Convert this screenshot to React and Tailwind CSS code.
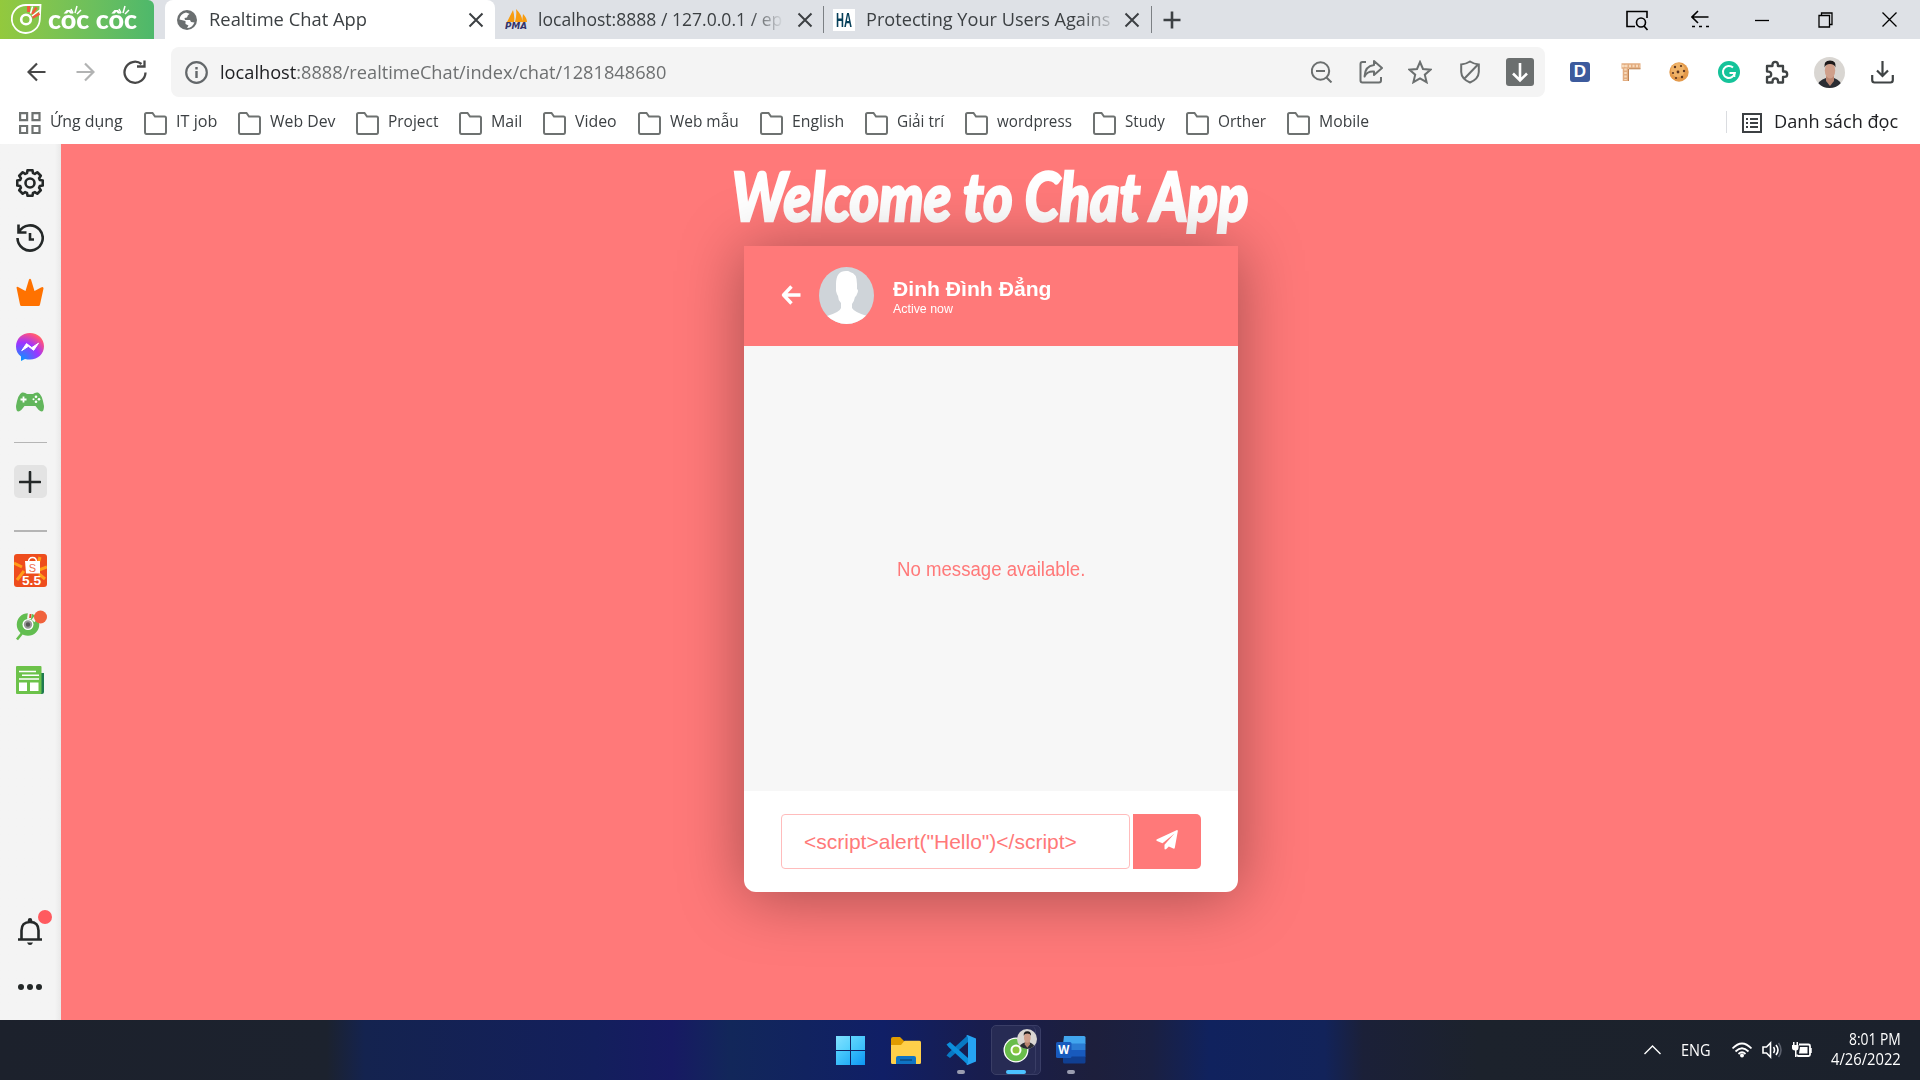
import { useLayoutEffect, useRef, useState } from "react";

const UI = "font-['Open_Sans','Noto_Sans',sans-serif]";

/* Single line of text condensed or stretched to an exact width. */
function Fit({ w, className = "", children }) {
  const ref = useRef(null);
  const [scale, setScale] = useState(1);
  useLayoutEffect(() => {
    setScale(w / ref.current.offsetWidth);
  }, [w]);
  return (
    <span className={"block shrink-0 " + className} style={{ width: w }}>
      <span ref={ref} className="inline-block origin-left whitespace-nowrap" style={{ transform: `scaleX(${scale})` }}>
        {children}
      </span>
    </span>
  );
}

function Icon({ s = 24, w = s, h = s, box, sw = 2, className = "", children }) {
  return (
    <svg width={w} height={h} viewBox={box || `0 0 ${w} ${h}`} fill="none" stroke="currentColor" strokeWidth={sw} className={"block shrink-0 " + className}>
      {children}
    </svg>
  );
}

const Close = ({ className }) => (
  <Icon s={16} className={"text-[#3c4043] " + className}>
    <path d="M1.5 1.5l13 13M14.5 1.5l-13 13" />
  </Icon>
);

const Folder = () => (
  <Icon w={23} h={23} sw={2} className="text-[#6e7271]">
    <path d="M1 4V2.5Q1 1 2.5 1H8.500l2.500 3.500H20.500Q22 4.500 22 6V20Q22 22 20.500 22H2.500Q1 22 1 20Z" />
  </Icon>
);

const bookmarks = [
  ["IT job", 41], ["Web Dev", 65], ["Project", 50], ["Mail", 31], ["Video", 42], ["Web mẫu", 69],
  ["English", 52], ["Giải trí", 47], ["wordpress", 75], ["Study", 40], ["Orther", 48], ["Mobile", 50],
];

function TabStrip() {
  return (
    <div className="flex h-[39px] items-center bg-[#dee1e6]">
      <div className="flex h-[39px] w-[154px] items-center rounded-tr-[6px] bg-linear-to-r from-[#93c93d] to-[#4db86b] pl-[11px]">
        <Icon w={31} h={32} sw={1.8} className="text-white">
          <path d="M15 1H29.500L28.800 15.500A14 14 0 1 1 15 1" />
          <circle cx="15" cy="15.500" r="4.800" strokeWidth="2.600" />
          <path d="M17.500 2v6" stroke="#f15a3c" strokeWidth="3" />
          <path d="M25.500 3.500l-4.500 6.500M28.500 9.500l-7 4" stroke="#f15a3c" strokeWidth="2.600" />
          <path d="M21.500 2.500l-2 7M29 6l-8 6" strokeWidth="1.500" />
        </Icon>
        <div className="relative ml-[6px] h-[39px] w-[90px]">
          <Fit w={89} className="pt-[3px] font-['Lato',sans-serif] text-[26px] leading-[32px] font-black text-white">côc côc</Fit>
          <svg width="90" height="14" className="absolute top-[4px] left-0" fill="none" stroke="white" strokeWidth="1.500">
            <path d="M25 9l-2-4M27 9l2-7M29 10l4-4M73 9l-2-4M75 9l2-7M77 10l4-4" />
          </svg>
        </div>
      </div>
      <div className="ml-[11px] flex h-[39px] w-[330px] items-center rounded-t-[8px] bg-white pl-[12px]">
        <Icon s={20}>
          <circle cx="10" cy="10" r="10" fill="#6b6f70" stroke="none" />
          <path d="M9 2.500Q3 4 2.500 9.500l6 1.500v3l3 1.500L10 18Q15 18 17.500 12.500L14 12l-1-2H8L7.500 8 10 7.500 11 5l2-1z" fill="#fff" stroke="none" />
          <path d="M12 3.500l1 3.500 4 2.500-1-4z" fill="#6b6f70" stroke="none" />
        </Icon>
        <Fit w={158} className="ml-[12px] pb-px text-[18px] text-[#3c4043]">Realtime Chat App</Fit>
        <Close className="ml-[101px]" />
      </div>
      <div className="flex h-[39px] w-[330px] items-center pl-[10px]">
        <Icon w={23} h={23}>
          <path d="M2 14L8 2Q10 9 9 14ZM10 14Q12 7 11 1Q18 8 17 14ZM17 14l1-8q4 4 4 8z" fill="#f89c0e" stroke="none" />
          <text x="0" y="21" fontSize="9" textLength="22" lengthAdjust="spacingAndGlyphs" fill="#34346a" stroke="none" className="font-['DejaVu_Sans'] font-bold italic">PMA</text>
        </Icon>
        <div className="ml-[10px] w-[246px] mask-[linear-gradient(to_right,black_212px,transparent_246px)] pb-px">
          <Fit w={244} className="text-[18px] text-[#3c4043]">localhost:8888 / 127.0.0.1 / ep</Fit>
        </div>
        <Close className="ml-[13px]" />
      </div>
      <div className="-ml-[2px] h-[27px] w-px bg-[#7c8084]" />
      <div className="flex h-[39px] w-[328px] items-center pl-[9px]">
        <div className="flex h-[22px] w-[22px] items-center bg-white pl-[3px] font-['Liberation_Sans'] text-[20px] font-bold text-[#07405a]">
          <Fit w={16}>HA</Fit>
        </div>
        <div className="ml-[11px] w-[246px] mask-[linear-gradient(to_right,black_212px,transparent_252px)] pb-px">
          <Fit w={244} className="text-[18px] text-[#3c4043]">Protecting Your Users Agains</Fit>
        </div>
        <Close className="ml-[12px]" />
      </div>
      <div className="-ml-px h-[27px] w-px bg-[#7c8084]" />
      <Icon s={18} sw={2.6} className="ml-[11px] text-[#3c4043]"><path d="M9 0.500v17M0.500 9h17" /></Icon>
      <div className="ml-auto flex items-center pr-[23px] text-black">
        <Icon w={23} h={22} sw={1.6}>
          <path d="M9 17.500H1V2.500H21V9" />
          <circle cx="15" cy="13.500" r="4.500" />
          <path d="M18 17l3.500 4" />
        </Icon>
        <Icon w={18} h={20} sw={1.6} className="ml-[42px]">
          <path d="M17.500 7H1.500M7 1L1 7l6 6" />
          <path d="M1 16.500h17" strokeDasharray="3 4" />
        </Icon>
        <Icon w={14} h={20} sw={1.3} className="ml-[46px]"><path d="M0 10.500h14" /></Icon>
        <Icon w={15} h={16} sw={1.3} className="ml-[49px]"><path d="M1 3.500h10.500V15H1zM3.500 3.500V1H14v11.500h-2.500" /></Icon>
        <Icon s={15} sw={1.3} className="ml-[49px]"><path d="M0.500 0.500l14 14M14.500 0.500l-14 14" /></Icon>
      </div>
    </div>
  );
}

function Portrait({ size, className = "" }) {
  return (
    <svg width={size} height={size} viewBox="0 0 31 31" className={"block shrink-0 rounded-full " + className}>
      <rect width="31" height="31" fill="#d9d6d2" />
      <path d="M3 31Q4 23 12 21h8q7 2 8 10z" fill="#2b2d33" />
      <path d="M12 19h8v5l-4 5-4-5z" fill="#b98570" />
      <ellipse cx="16" cy="13.500" rx="5.200" ry="8" fill="#cf9f8a" />
      <path d="M10.500 10.500Q9.500 3.500 16 3.500t5.500 7Q20.500 7 16 7t-5.500 3.500z" fill="#1d1a1a" />
    </svg>
  );
}

function Toolbar() {
  return (
    <div className="flex h-[66px] items-center bg-white">
      <Icon w={19} h={20} sw={2.2} className="ml-[27px] text-[#474747]"><path d="M18.500 10H1.500M10 1.500L1.500 10l8.500 8.500" /></Icon>
      <Icon w={19} h={20} sw={2.2} className="ml-[30px] text-[#b2b3b3]"><path d="M0.500 10H17.500M9 1.500L17.500 10 9 18.500" /></Icon>
      <Icon s={24} sw={2.3} className="ml-[28px] text-[#474747]"><path d="M22.500 12.500A10.500 10.500 0 1 1 18.500 4M14 6.500H21.500V0.500" /></Icon>
      <div className="ml-[24px] flex h-[50px] w-[1374px] items-center rounded-[8px] bg-[#f4f4f4] pl-[14px]">
        <Icon s={23} className="text-[#63676a]">
          <circle cx="11.500" cy="11.500" r="10.300" strokeWidth="2.200" />
          <path d="M11.500 10v7M11.500 6v2.500" strokeWidth="2.400" />
        </Icon>
        <Fit w={446} className="ml-[12px] text-[18px] text-[#6e7071]"><span className="text-[#202124]">localhost</span>:8888/realtimeChat/index/chat/1281848680</Fit>
        <div className="ml-auto flex items-center pr-[11px] text-[#6b6f6f]">
          <Icon s={22}><circle cx="9.500" cy="10" r="8.700" /><path d="M5 10h9M15.500 16.500l5 5" /></Icon>
          <Icon s={24} className="ml-[26px]">
            <path d="M7 2H3.500Q1.500 2 1.500 4V20.500Q1.500 22.500 3.500 22.500H20Q22 22.500 22 20.500V17" />
            <path d="M15 1l8 7-8 7V11.500Q8 11 5.500 16.500 6 6 15 5z" strokeLinejoin="round" />
          </Icon>
          <Icon s={24} className="ml-[25px]"><path d="M12 2l3 7 7.500.700-5.700 5 1.800 7.500L12 18.300 5.400 22.200l1.800-7.500-5.700-5L9 9z" /></Icon>
          <Icon w={20} h={24} className="ml-[28px]"><path d="M10 1.500Q14 4 18.800 4.500V12Q18.500 19 10 22.500 1.500 19 1.200 12V4.500Q6 4 10 1.500zM4 19L17.500 5" /></Icon>
          <Icon s={28} className="ml-[26px]">
            <rect width="28" height="28" rx="3" fill="#6b6f6f" stroke="none" />
            <path d="M14 5v17M7 15.500l7 7 7-7" stroke="#fff" strokeWidth="2.600" />
          </Icon>
        </div>
      </div>
      <div className="ml-[25px] flex h-5 w-5 items-center justify-center rounded-[3px] bg-[#3c5a9d] font-['Liberation_Sans'] text-[17px] font-bold text-white">D</div>
      <Icon w={20} h={20} className="ml-[31px]">
        <path d="M0.500 4h19M4.500 1.500v17.500" stroke="#e3ad80" strokeWidth="5.500" />
        <path d="M1 4h18M4.500 3v15" stroke="#f8dabb" strokeWidth="2.500" strokeDasharray="2 1.500" />
        <path d="M7.500 7v12M8 6.800h11.500" stroke="#bd8252" strokeWidth="1" />
      </Icon>
      <Icon s={20} className="ml-[28px]">
        <circle cx="10" cy="10" r="9.700" fill="#e49a4b" stroke="none" />
        <circle cx="9" cy="8" r="7" fill="#efb267" stroke="none" />
        <g fill="#5b3420" stroke="none"><circle cx="6" cy="5" r="1.200" /><circle cx="12" cy="4" r="1.100" /><circle cx="15" cy="9" r="1.200" /><circle cx="9" cy="10" r="1.400" /><circle cx="4" cy="11" r="1.100" /><circle cx="13" cy="15" r="1.200" /><circle cx="7" cy="16" r="1.100" /></g>
      </Icon>
      <Icon s={22} className="ml-[29px]">
        <circle cx="11" cy="11" r="11" fill="#15c39a" stroke="none" />
        <path d="M15 6.500A6 6 0 1 0 16.800 12H11.500" stroke="#fff" strokeWidth="2" /><path d="M16.500 11v5" stroke="#fff" strokeWidth="1.600" />
      </Icon>
      <Icon w={24} h={24} sw={2.3} className="ml-[25px] text-[#3f4344]">
        <path d="M2 6H7.500V4.500a2.700 2.700 0 0 1 5.400 0V6H18v5.500h1.500a2.700 2.700 0 0 1 0 5.400H18V22.500H13V21a2.700 2.700 0 0 0-5.400 0v1.500H2V17H3.500a2.700 2.700 0 0 0 0-5.400H2z" strokeLinejoin="round" />
      </Icon>
      <Portrait size={31} className="ml-[25px]" />
      <Icon w={23} h={23} sw={2.2} className="ml-[26px] text-[#3f4344]"><path d="M11.500 0v14.500M6 9.500l5.500 5.500L17 9.500M1.200 14v5Q1.200 21.500 3.500 21.500H19.500Q21.800 21.500 21.800 19V14" /></Icon>
    </div>
  );
}

function BookmarksBar() {
  return (
    <div className="flex h-[39px] items-center bg-white pb-[6px] pl-[19px] text-[#3c4043]">
      <Icon w={22} h={23} sw={2.2} className="mt-[3px] text-[#6e7271]">
        <path d="M1.100 1.100h7v7h-7zM13.500 1.100h7v7h-7zM1.100 14h7v7h-7zM13.500 14h7v7h-7z" />
      </Icon>
      <Fit w={73} className="ml-[9px] pb-px text-[17px]">Ứng dụng</Fit>
      <div className="ml-[21px] flex gap-[21px]">
        {bookmarks.map(([label, w]) => (
          <div key={label} className="flex items-center gap-[9px]">
            <div className="mt-[3px]"><Folder /></div>
            <Fit w={w} className="pb-px text-[17px]">{label}</Fit>
          </div>
        ))}
      </div>
      <div className="ml-auto flex items-center pr-[22px]">
        <div className="h-[22px] w-px bg-[#dadce0]" />
        <Icon w={20} h={20} sw={2} className="mt-[2px] ml-[15px] text-[#3c4043]">
          <path d="M1 1h18v18H1zM8 6h8M8 10h8M8 14h8" /><path d="M4 6h2M4 10h2M4 14h2" />
        </Icon>
        <Fit w={124} className="ml-[12px] text-[18px] text-[#202124]">Danh sách đọc</Fit>
      </div>
    </div>
  );
}

const gearPath = (() => {
  const pts = [];
  for (let i = 0; i < 8; i++) {
    [[-0.3, 10.3], [-0.19, 13], [0.19, 13], [0.3, 10.3]].forEach(([o, r]) => {
      const t = (i * Math.PI) / 4 + o;
      pts.push(`${(14 + r * Math.sin(t)).toFixed(2)} ${(14 - r * Math.cos(t)).toFixed(2)}`);
    });
  }
  return "M" + pts.join("L") + "Z";
})();

function Sidebar() {
  return (
    <aside className="flex w-[61px] shrink-0 flex-col items-center bg-linear-to-r from-[#f4f4f4] from-90% to-[#e9e9e9] pt-[25px] pr-px text-[#242828]">
      <Icon s={28} sw={2.6}><path d={gearPath} strokeLinejoin="round" /><circle cx="14" cy="14" r="4.500" /></Icon>
      <Icon s={28} sw={2.6} className="mt-[27px]"><path d="M3 8A12.600 12.600 0 1 1 1.500 14M2.500 0.500V8.500H10.500M14 9v6.500h4" /></Icon>
      <Icon s={28} className="mt-[26px]">
        <path d="M0.500 9.500Q1 8 3 9.500L9.500 13 13 1.500Q14 0 15 1.500L18.500 13 25 9.500Q27.500 8 27.500 10.500L24 26.500Q23.700 28 22.500 28H5.500Q4.300 28 4 26.500z" fill="#ff7200" stroke="none" />
      </Icon>
      <Icon s={28} className="mt-[27px]">
        <defs><radialGradient id="msg" cx=".19" cy=".99" r="1.090"><stop offset="0" stopColor="#0099ff" /><stop offset=".6" stopColor="#a033ff" /><stop offset=".93" stopColor="#ff5280" /><stop offset="1" stopColor="#ff7061" /></radialGradient></defs>
        <path d="M14 0C6 0 0 5.800 0 13.600c0 4.100 1.700 7.600 5 10V28l4-2.100c1.500.400 3.300.700 5 .700 8 0 14-5.700 14-13.300S22 0 14 0z" fill="url(#msg)" stroke="none" />
        <path d="M5.700 17.700l4.800-7.100 5.300 4 6.700-4.400-4.800 7.100-5.300-4z" fill="#fff" stroke="#fff" strokeWidth="1" strokeLinejoin="round" />
      </Icon>
      <Icon w={28} h={20} className="mt-[31px]">
        <path d="M6 0.500Q9 0 11 2h6q2-2 5-1.500Q26 2 28 14 28 19.500 25.500 19.500 23 19 19.500 14h-11Q5 19 2.500 19.500 0 19.500 0 14 2 2 6 0.500z" fill="#62b65c" stroke="none" />
        <path d="M7.500 4.500v6M4.500 7.500h6" stroke="#fff" strokeWidth="1.800" />
        <g fill="#fff" stroke="none"><circle cx="20" cy="4.800" r="1.300" /><circle cx="20" cy="9.800" r="1.300" /><circle cx="17.500" cy="7.300" r="1" /><circle cx="23" cy="7.300" r="1.300" /></g>
      </Icon>
      <div className="mt-[30px] h-px w-[33px] bg-[#b5b5b5]" />
      <div className="mt-[22px] flex h-[33px] w-[33px] items-center justify-center rounded-[5px] bg-[#e3e3e3]">
        <Icon s={22} sw={2.6}><path d="M11 1v20M1 11h20" strokeLinecap="round" /></Icon>
      </div>
      <div className="mt-[32px] h-[2px] w-[33px] bg-[#b5b5b5]" />
      <Icon s={33} className="mt-[22px]">
        <rect width="33" height="33" rx="3" fill="#ee4d1d" stroke="none" />
        <path d="M0 9l8 4M3 26l7-9M26 3l-2 7M33 13l-8 3M31 25l-6-5" stroke="#ff9d1a" strokeWidth="3" />
        <path d="M11 7h15v12.500H12z" fill="#fff" stroke="none" />
        <path d="M14.500 8Q14.500 3.500 18.500 3.500T22.500 8" stroke="#fff" strokeWidth="1.400" />
        <text x="18.500" y="17.500" textAnchor="middle" fontSize="11" fill="#ee6d4d" stroke="none" className="font-['Liberation_Sans']">S</text>
        <text x="8" y="31" fontSize="13.500" textLength="19" lengthAdjust="spacingAndGlyphs" fill="#fff" stroke="none" className="font-['Liberation_Sans'] font-bold">5.5</text>
      </Icon>
      <Icon w={33} h={31} className="mt-[23px]">
        <path d="M3 29.500L9 22" stroke="#66bd4d" strokeWidth="2.600" />
        <circle cx="14" cy="14.500" r="8" stroke="#62bd50" strokeWidth="6.500" />
        <circle cx="14" cy="14.500" r="5.500" fill="#fff" stroke="none" /><circle cx="14" cy="14.500" r="3.200" fill="#555" stroke="#999" />
        <path d="M15 9l1-7M19 11l5-6" stroke="#f4f4f4" strokeWidth="4" /><path d="M16 8l.500-4" stroke="#e8442e" strokeWidth="1.800" />
        <circle cx="26.500" cy="7" r="6.500" fill="#f0623c" stroke="none" />
      </Icon>
      <Icon w={28} h={28} className="mt-[25px]">
        <path d="M22 7h6V26q0 2-2 2H20z" fill="#1f7a50" stroke="none" />
        <rect width="25.500" height="28" rx="1" fill="#6cc24a" stroke="none" />
        <path d="M3 5.500h17M6 9.300h17M3 13h20" stroke="#fff" strokeWidth="1.600" />
        <path d="M3 16.500h8V25H3zM14 16.500h8.500V25H14z" fill="#fff" stroke="none" />
      </Icon>
      <div className="relative mt-[224px]">
        <Icon w={26} h={27} sw={2.6}>
          <path d="M1 21.500H25M4.500 21V12.500Q4.500 4 13 4t8.500 8.500V21" /><circle cx="13" cy="2.300" r="2.200" fill="currentColor" stroke="none" /><path d="M10 24.500h6q-1 2.500-3 2.500t-3-2.500z" fill="currentColor" stroke="none" />
        </Icon>
        <div className="absolute -top-[8px] left-[21px] h-[14px] w-[14px] rounded-full bg-[#ff5a5f]" />
      </div>
      <div className="mt-[39px] flex gap-[3px]">
        <i className="h-[6px] w-[6px] rounded-full bg-[#242828]" /><i className="h-[6px] w-[6px] rounded-full bg-[#242828]" /><i className="h-[6px] w-[6px] rounded-full bg-[#242828]" />
      </div>
    </aside>
  );
}

function ChatCard() {
  return (
    <section className="relative mt-[4px] ml-px flex h-[646px] w-[494px] flex-col overflow-visible rounded-b-[12px] bg-white font-['Liberation_Sans',sans-serif] shadow-[0_4px_64px_0_rgba(0,0,0,0.36)]">
      <header className="flex h-[100px] items-center bg-[#ff7979] pl-[37px] text-white">
        <Icon w={20} h={20} sw={3.4} className="-mt-[2px]"><path d="M19.500 10H3M10.500 1.500L2.500 10l8 8.500" strokeLinejoin="round" /></Icon>
        <svg width="55" height="57" viewBox="0 0 55 57" className="-mt-px ml-[18px] block">
          <clipPath id="av"><ellipse cx="27.500" cy="28.500" rx="27.500" ry="28.500" /></clipPath>
          <g clipPath="url(#av)">
            <rect width="55" height="57" fill="#cfd4d9" />
            <path d="M17 17Q17 4 27 4q3-.500 4 1 7 1 7 12v5q2 1 0 5-1 3-2 3-1 5-3 7v4q2 4 15 8l2 10H4l4-10q13-4 14-8v-5q-3-3-3-7-1-1-2-5v-4z" fill="#fff" />
          </g>
        </svg>
        <div className="ml-[19px] pb-px">
          <Fit w={158} className="text-[21px] leading-[23px] font-bold">Đinh Đình Đẳng</Fit>
          <Fit w={60} className="mt-[2px] text-[13px] leading-[13px]">Active now</Fit>
        </div>
      </header>
      <div className="flex h-[445px] items-center justify-center bg-[#f7f7f7] pt-px text-[20px] text-[#ff7979]">
        <Fit w={188}>No message available.</Fit>
      </div>
      <form className="flex px-[37px] pt-[23px]">
        <div className="flex h-[55px] w-[350px] items-center rounded-[4px] border border-[#ffbcbc] pl-[22px] text-[21px] text-[#ff7979]">
          <Fit w={273}>{'<script>alert("Hello")</script>'}</Fit>
        </div>
        <div className="ml-[3px] flex h-[55px] w-[68px] items-center justify-center rounded-r-[5px] bg-[#ff7979]">
          <Icon w={22} h={20} className="mb-[3px]">
            <path d="M21.500 0.300Q22 .500 21.800 1.200L18.800 17.800Q18.500 19 17.300 18.500L12.800 16.500 10.300 19Q8.500 20 8.500 18.500V14.800L18.500 3.500 6.500 13.200 1 10.900Q-.500 10 1 9.200L20.500.200Q21-.100 21.500.300z" fill="#fff" stroke="none" />
          </Icon>
        </div>
      </form>
    </section>
  );
}

function Taskbar() {
  return (
    <footer className="flex h-[60px] items-center bg-[linear-gradient(90deg,#1c212c_0%,#1c222e_17%,#14234f_19%,#131f5c_31%,#171a63_35%,#12275a_38%,#101f66_46%,#181d4e_51%,#1d1f3c_57%,#1a2042_60%,#10225e_63%,#12235a_69%,#1b2038_71%,#1c222c_77%,#1b212c_100%)] text-white">
      <div className="ml-[836px] grid h-[29px] w-[29px] grid-cols-2 gap-px">
        <i className="bg-linear-to-br from-[#7fe0ff] to-[#4fd0fd]" /><i className="bg-linear-to-br from-[#5fd5fe] to-[#35bdfa]" />
        <i className="bg-linear-to-br from-[#4fcdfd] to-[#22adf7]" /><i className="bg-linear-to-br from-[#35bdfa] to-[#0b97f3]" />
      </div>
      <Icon w={30} h={27} className="ml-[26px]">
        <path d="M0 2Q0 0 2 0H9L13 4V9H0z" fill="#e09c00" stroke="none" />
        <path d="M0 8H10L13.500 3.800H28.500Q30 3.800 30 5.500V25.500Q30 27 28.500 27H1.500Q0 27 0 25.500z" fill="#ffd04a" stroke="none" />
        <path d="M5 27V21q0-2 2-2H23q2 0 2 2v6z" fill="#0f74c4" stroke="none" /><path d="M9 23h12" stroke="#0b4a80" strokeWidth="1.500" />
      </Icon>
      <div className="ml-[25px] flex h-[50px] flex-col items-center pt-[10px]">
        <Icon s={30}>
          <path d="M22 0L3 17.500 0.500 20.500 4 23 22 7z" fill="#0879c4" stroke="none" />
          <path d="M22 30L3 12.500.500 9.500 4 7 22 23z" fill="#0c8fdd" stroke="none" />
          <path d="M21.500 0L30 3.500V26.500L21.500 30 20 29Q22 29 22 27V3Q22 1 20 1z" fill="#26a3f2" stroke="none" />
        </Icon>
        <i className="mt-[5px] h-[4px] w-[8px] rounded-full bg-[#9a9db0]" />
      </div>
      <div className="relative ml-[15px] flex h-[50px] w-[50px] flex-col items-center rounded-[5px] border border-[#3a3e66] bg-[#272b54] pt-[11px]">
        <div className="absolute top-0 right-[4px] h-[48px] w-[5px] rounded-r-[5px] border-r border-[#3a3e66]" />
        <Icon s={26}>
          <circle cx="13" cy="13" r="12.500" fill="#fff" stroke="none" /><circle cx="13" cy="13" r="7.700" stroke="#69bd4b" strokeWidth="7" /><circle cx="13" cy="13" r="4.500" stroke="#fff" strokeWidth="2" fill="#8bc63f" />
        </Icon>
        <Portrait size={20} className="absolute top-[3px] left-[25px]" />
        <i className="mt-[7px] h-[4px] w-[20px] rounded-full bg-[#4cc2ff]" />
      </div>
      <div className="ml-[15px] flex h-[50px] flex-col items-center pt-[11px]">
        <Icon w={30} h={28}>
          <path d="M8 0H28q1.500 0 1.500 1.500V8H7z" fill="#41a5ee" stroke="none" /><path d="M7 7.500H29.500V14H7z" fill="#2b7cd3" stroke="none" /><path d="M7 14H29.500V21H7z" fill="#185abd" stroke="none" /><path d="M7 20.500H29.500V26q0 1.500-1.500 1.500H8.500Q7 27.500 7 26z" fill="#103f91" stroke="none" />
          <rect y="6" width="15.500" height="16" rx="1.500" fill="#185abd" stroke="none" />
          <text x="7.700" y="18" textAnchor="middle" fontSize="11.500" fill="#fff" stroke="none" className="font-['Open_Sans'] font-bold">W</text>
        </Icon>
        <i className="mt-[6px] h-[4px] w-[8px] rounded-full bg-[#9a9db0]" />
      </div>
      <div className="ml-auto flex items-center pr-[19px]">
        <Icon w={17} h={10} sw={1.4}><path d="M.500 9L8.500 1l8 8" /></Icon>
        <Fit w={30} className="ml-[20px] pb-px text-[16px]">ENG</Fit>
        <Icon w={20} h={16} sw={1.8} className="ml-[21px]">
          <path d="M.500 6.500Q10-3.500 19.500 6.500M3.500 9.500q6.500-6.500 13 0M6.500 12q3.500-3.500 7 0" /><circle cx="10" cy="13.500" r="2" fill="#fff" stroke="none" />
        </Icon>
        <Icon w={20} h={18} sw={1.6} className="ml-[10px]">
          <path d="M1 6H4.500L8.500 2V16L4.500 12H1zM11.500 6q2 3 0 6M14 4q4 5 0 10" /><path d="M16.500 2q5 7 0 14" stroke="#5b606c" />
        </Icon>
        <Icon w={20} h={18} sw={1.8} className="ml-[10px]">
          <path d="M7 3.500H16.500Q18 3.500 18 5V13.500Q18 15 16.500 15H6Q5 15 5 13.500" /><path d="M8 6h7.500v6.500H7z" fill="#fff" stroke="none" /><path d="M18.500 7v5" strokeWidth="2.500" />
          <path d="M0 4h6.500v3q0 2-2 2.500V16H3V9.500Q0 9 0 7zM1 1h1.500v3H1zM4.500 1H6v3H4.500z" fill="#fff" stroke="none" />
        </Icon>
        <div className="ml-[19px] flex flex-col items-end pb-[2px] text-[16px] leading-[20px]">
          <Fit w={52}>8:01 PM</Fit>
          <Fit w={70}>4/26/2022</Fit>
        </div>
      </div>
    </footer>
  );
}

export default function App() {
  return (
    <div className={"flex h-[1080px] w-[1920px] flex-col overflow-hidden bg-[#ff7979] " + UI}>
      <TabStrip />
      <Toolbar />
      <BookmarksBar />
      <div className="flex h-[876px]">
        <Sidebar />
        <main className="flex flex-1 flex-col items-center overflow-hidden bg-[#ff7979] pt-[5px]">
          <h1 className="font-['Lato',sans-serif] text-[67px] leading-[93px] font-black text-white italic [-webkit-text-stroke:2.5px_white]">
            <Fit w={517} className="h-[93px]">Welcome to Chat App</Fit>
          </h1>
          <ChatCard />
        </main>
      </div>
      <Taskbar />
    </div>
  );
}
